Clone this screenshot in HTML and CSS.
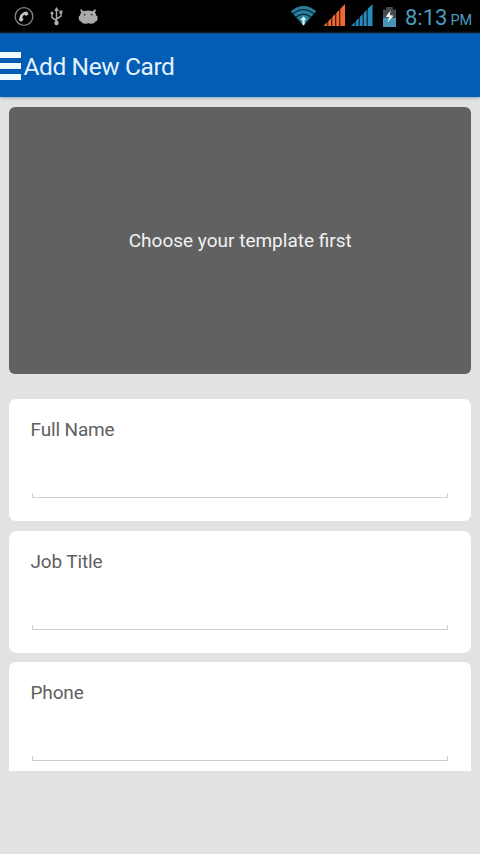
FILE: index.html
```html
<!DOCTYPE html>
<html lang="en">
<head>
<meta charset="utf-8">
<title>Add New Card</title>
<link rel="stylesheet" href="styles.css">
</head>
<body>
<div class="status">
  <svg class="status-icons" width="110" height="33" viewBox="0 0 110 33">
    <circle cx="24" cy="16.500" r="8.800" fill="none" stroke="#858585" stroke-width="1.300"/>
    <path d="M19.200 20.800C18.800 15.500 22.200 11.800 27 11.500l1.600 2.800-2.600 1.600-1.500-1.200c-1.200.6-2 1.800-2.200 3.200l1.300 1.200-1.800 2.700z" fill="#c4c4c4"/>
    <g fill="none" stroke="#a9a9a9" stroke-width="1.500"><path d="M56.500 10v13M56.500 20.500l-4.500-2.800v-4M56.500 19l4.500-2.800v-4"/></g>
    <path d="M56.500 7l2.400 4h-4.800zM59.400 10.500h3v3h-3z" fill="#a9a9a9"/>
    <circle cx="52" cy="13" r="1.600" fill="#a9a9a9"/><circle cx="56.500" cy="23" r="2.200" fill="#b5b5b5"/>
    <path d="M81 9.200L83.800 11.200Q88 10 92.400 11.200L95.200 9.200 96 10 95 12.600Q96 14 96.200 15.500 98 15.600 97.700 18.200 97.500 21 95.500 21.600 94 24 91 23.800L88.500 23.200 86 23.800Q82.500 24.200 81 21.600 79 21 78.600 18.200 78.400 15.800 80 15.500 80.200 14 81.200 12.600L80.200 10z" fill="#aaa"/>
    <circle cx="84.700" cy="14.600" r=".9" fill="#333"/><circle cx="91.700" cy="14.600" r=".9" fill="#333"/>
  </svg>
  <svg class="status-icons" width="110" height="33" viewBox="290 0 110 33">
    <path d="M290.800 11.200Q303.500 .8 316.200 11.200L303.500 25.500z" fill="#287f9f"/>
    <g fill="none" stroke="#0a2833" stroke-width="1.300"><path d="M292.800 13.800q10.700-8.500 21.400 0M296 17.200q7.500-6 15 0"/></g>
    <path d="M303.500 16.300l3.200 3.600-2 .2v4.100l-1.200 1.300-1.200-1.300v-4.100l-2-.2z" fill="#d5f3f8"/>
    <path d="M323.500 26L345 4v22z" fill="#ed6930"/>
    <path d="M351 26L372.500 4v22z" fill="#2789bd"/>
    <path d="M327.700 4v23M331.700 4v23M335.700 4v23M339.700 4v23M355.200 4v23M359.200 4v23M363.200 4v23M367.200 4v23" stroke="#000" stroke-opacity=".75" stroke-width="1.200"/>
    <path d="M386.300 7h6.400v2.500h3.300V18h-13V9.500h3.300z" fill="#454b4e"/>
    <path d="M383 18h13v9h-13z" fill="#4a95b5"/>
    <path d="M390.500 10.500l-4.800 6.200 3.400.6-1.300 5 5.700-6.600-3.700-.7z" fill="#f0f5f6"/>
  </svg>
  <div class="clock"><span class="time">8:13</span><span class="meridiem">PM</span></div>
</div>
<header class="bar">
  <div class="menu"><i></i><i></i><i></i></div>
  <h1 class="title">Add New Card</h1>
</header>
<main class="content">
  <section class="template"><span>Choose your template first</span></section>
  <section class="card"><label class="label">Full Name</label><div class="field"></div></section>
  <section class="card"><label class="label">Job Title</label><div class="field"></div></section>
  <section class="card cut"><label class="label">Phone</label><div class="field"></div></section>
</main>
</body>
</html>
```
FILE: styles.css
```css
* { box-sizing: border-box; }
body {
  margin: 0;
  height: 854px;
  overflow: hidden;
  background: #e2e2e2;
  font-family: Roboto, sans-serif;
}
.status {
  display: flex;
  justify-content: space-between;
  height: 33px;
  background: #000;
}
.status-icons { display: block; flex: none; }
.status-icons + .status-icons { margin-left: auto; }
.clock {
  display: flex;
  align-items: baseline;
  width: 80px;
  padding-left: 5px;
  color: #4a9dbd;
  line-height: 35px;
  white-space: nowrap;
}
.time { font-size: 22px; }
.meridiem { margin-left: 3px; font-size: 14.5px; }
.bar {
  display: flex;
  align-items: center;
  height: 64px;
  background: #045db5;
  border-top: 1px solid #0a4b98;
  box-shadow: 0 1px 3px #8da3b8;
}
.menu {
  display: flex;
  flex-direction: column;
  gap: 5px;
  width: 21px;
}
.menu i { height: 6px; background: #f0fbff; }
.title {
  margin: 1px 0 0 2.5px;
  color: #e3f2fc;
  font-size: 24.5px;
  font-weight: 400;
  letter-spacing: -0.4px;
}
.content { padding: 10px 9.5px 0 9px; }
.template {
  display: flex;
  align-items: center;
  justify-content: center;
  height: 267px;
  margin-bottom: 25px;
  padding-left: 1px;
  border-radius: 6px;
  background: #616161;
  color: #f2f2f2;
  font-size: 19px;
}
.card {
  height: 122px;
  margin-bottom: 9.5px;
  padding: 19px 22.5px 0 22px;
  border-radius: 7px;
  background: #fff;
}
.cut { height: 109px; border-radius: 7px 7px 0 0; }
.label {
  display: block;
  height: 75px;
  margin-left: -0.5px;
  color: #606060;
  font-size: 19px;
  line-height: 24px;
  letter-spacing: -0.15px;
}
.field {
  height: 5px;
  margin-left: 1px;
  border: 1px solid #cfcfcf;
  border-top: 0;
}
```
